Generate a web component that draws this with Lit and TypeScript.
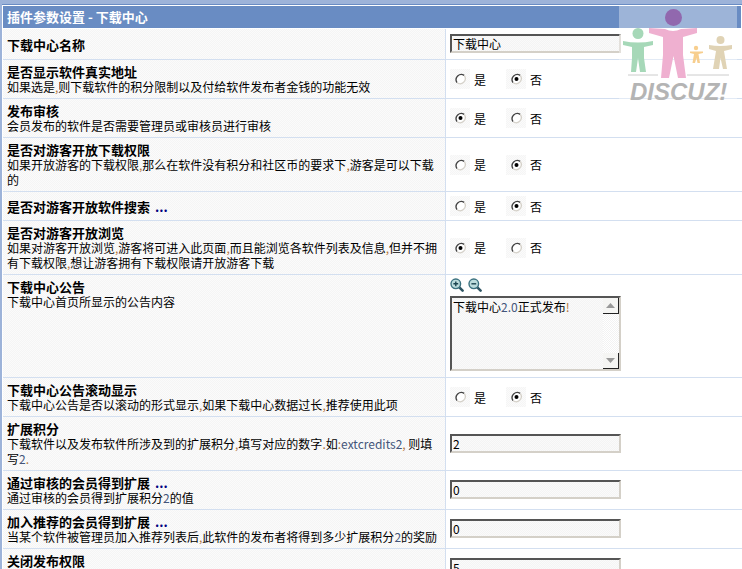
import { LitElement, html, css, svg } from "lit";
import { customElement } from "lit/decorators.js";

type Row = {
  title: string;
  more?: boolean;
  desc?: string;
  radio?: "yes" | "no";
  value?: string;
  notice?: boolean;
};

const ROWS: Row[] = [
  { title: "下载中心名称", value: "下载中心" },
  { title: "是否显示软件真实地址", desc: "如果选是,则下载软件的积分限制以及付给软件发布者金钱的功能无效", radio: "no" },
  { title: "发布审核", desc: "会员发布的软件是否需要管理员或审核员进行审核", radio: "yes" },
  { title: "是否对游客开放下载权限", desc: "如果开放游客的下载权限,那么在软件没有积分和社区币的要求下,游客是可以下载\n的", radio: "no" },
  { title: "是否对游客开放软件搜索", more: true, radio: "no" },
  { title: "是否对游客开放浏览", desc: "如果对游客开放浏览,游客将可进入此页面,而且能浏览各软件列表及信息,但并不拥\n有下载权限,想让游客拥有下载权限请开放游客下载", radio: "yes" },
  { title: "下载中心公告", desc: "下载中心首页所显示的公告内容", notice: true },
  { title: "下载中心公告滚动显示", desc: "下载中心公告是否以滚动的形式显示,如果下载中心数据过长,推荐使用此项", radio: "no" },
  { title: "扩展积分", desc: "下载软件以及发布软件所涉及到的扩展积分,填写对应的数字.如:extcredits2, 则填\n写2.", value: "2" },
  { title: "通过审核的会员得到扩展", more: true, desc: "通过审核的会员得到扩展积分2的值", value: "0" },
  { title: "加入推荐的会员得到扩展", more: true, desc: "当某个软件被管理员加入推荐列表后,此软件的发布者将得到多少扩展积分2的奖励", value: "0" },
  { title: "关闭发布权限", desc: "\u00a0", value: "5" },
];

const tint = (text: string) =>
  text.split(/([,.:]|[A-Za-z0-9]+)/).map((part, i) =>
    i % 2 === 0 ? part : html`<span class=${/[A-Za-z0-9]/.test(part) ? "latin" : "punct"}>${part}</span>`
  );

const radioIcon = (on: boolean) => html`<svg class="radio" width="20" height="20" viewBox="0 0 20 20">
  <circle cx="10.5" cy="10" r="5" fill="#fff"></circle>
  <path d="M7 13.600A5.200 5.200 0 0 1 14.200 6.400" fill="none" stroke="#444" stroke-width="1.4"></path>
  <path d="M14.400 6.600A5.200 5.200 0 0 1 7.200 13.800" fill="none" stroke="#d4d0c8" stroke-width="1.3"></path>
  ${on ? svg`<circle cx="10.5" cy="10" r="2" fill="#000"></circle>` : ""}
</svg>`;

const zoomIcon = (plus: boolean) => html`<svg width="14" height="14" viewBox="0 0 14 14">
  <path d="M8.600 8.600 12.600 12.600" stroke="#2f5563" stroke-width="2.600" stroke-linecap="round"></path>
  <circle cx="5.800" cy="5.800" r="4.800" fill="#bcdcdc" stroke="#3c7280" stroke-width="1.400"></circle>
  <path d="M3.400 5.800H8.200${plus ? "M5.800 3.400V8.200" : ""}" stroke="#1c4450" stroke-width="1.400"></path>
</svg>`;

@customElement("app-root")
export class AppRoot extends LitElement {
  static styles = css`
    :host {
      display: block;
      position: relative;
      width: 742px;
      height: 569px;
      overflow: hidden;
      background: #9db3d9;
      font-family: "Noto Sans CJK SC", "Liberation Sans", sans-serif;
      font-size: 12px;
      line-height: 15px;
      color: #000;
    }
    .outer {
      margin: 4px 0 0 2px;
      border-top: 1px solid #6a8cc3;
      background: #fff;
      padding: 1px 0 0 1px;
    }
    .head {
      background: #698cc3;
      color: #fff;
      font-weight: 700;
      font-size: 13px;
      height: 22px;
      line-height: 22px;
      padding-left: 4px;
      margin-right: 1px;
      border-bottom: 1px solid #fff;
    }
    .row {
      display: grid;
      grid-template-columns: 443px 1fr;
      border-bottom: 1px solid #d3dff0;
    }
    .label {
      display: flex;
      flex-direction: column;
      justify-content: center;
      padding: 4px;
      border-right: 1px solid #d3dff0;
      background: repeating-conic-gradient(#f5f5f5 0 25%, #fbfbfb 0 50%) 0 0 / 2px 2px;
    }
    .label.top {
      justify-content: flex-start;
    }
    .title {
      font-weight: 700;
      font-size: 13px;
    }
    .more {
      color: #000080;
      margin-left: 2px;
    }
    .desc {
      white-space: pre-line;
    }
    .latin {
      color: #44557a;
    }
    .punct {
      color: #b5763a;
    }
    .field {
      display: flex;
      flex-direction: column;
      justify-content: center;
      align-items: flex-start;
      padding: 5px 4px 6px;
    }
    .radios {
      display: flex;
      gap: 20px;
      padding: 4px 0;
      margin: -5px 0 -6px;
    }
    .opt {
      display: flex;
      align-items: center;
      gap: 4px;
    }
    .radio {
      display: block;
      background: repeating-conic-gradient(#f5f5f5 0 25%, #fbfbfb 0 50%) 0 0 / 2px 2px;
    }
    input {
      box-sizing: border-box;
      width: 171px;
      height: 19px;
      margin: 0;
      padding: 0 1px;
      border-width: 2px;
      border-style: solid;
      border-color: #555 #d4d0c8 #d4d0c8 #555;
      border-radius: 0;
      outline: none;
      background: repeating-conic-gradient(#f4f4f4 0 25%, #fafafa 0 50%) 0 0 / 2px 2px;
      font: 12px/15px "Noto Sans CJK SC", "Liberation Sans", sans-serif;
      color: #000;
    }
    .notice {
      justify-content: flex-start;
      padding-top: 3px;
      gap: 5px;
    }
    .zooms {
      display: flex;
      gap: 4px;
      height: 13px;
    }
    .zooms svg {
      display: block;
    }
    .area {
      box-sizing: border-box;
      display: flex;
      width: 171px;
      height: 75px;
      border-width: 2px;
      border-style: solid;
      border-color: #555 #d4d0c8 #d4d0c8 #555;
      background: repeating-conic-gradient(#f4f4f4 0 25%, #fafafa 0 50%) 0 0 / 2px 2px;
    }
    .area-text {
      flex: 1;
      padding: 1px;
    }
    .bar {
      width: 16px;
      display: flex;
      flex-direction: column;
      justify-content: space-between;
      background: repeating-conic-gradient(#f2f2f2 0 25%, #fff 0 50%) 0 0 / 2px 2px;
    }
    .btn {
      box-sizing: border-box;
      height: 16px;
      background: #f5f5f3;
      border-right: 1px solid #222;
      border-bottom: 1px solid #222;
      display: flex;
      align-items: center;
      justify-content: center;
    }
    .logo {
      position: absolute;
      left: 0;
      top: 0;
      pointer-events: none;
    }
    .logo-text {
      font: italic 700 24px "Liberation Sans", sans-serif;
      fill: #b4b4b4;
    }
  `;

  private field(r: Row) {
    if (r.notice) {
      return html`<div class="field notice">
        <div class="zooms">${zoomIcon(true)}${zoomIcon(false)}</div>
        <div class="area">
          <div class="area-text">下载中心<span class="latin">2.0</span>正式发布<span class="punct">!</span></div>
          <div class="bar">
            <div class="btn"><svg width="9" height="5"><path d="M4.500 0 9 5H0Z" fill="#999"></path></svg></div>
            <div class="btn"><svg width="9" height="5"><path d="M0 0H9L4.500 5Z" fill="#999"></path></svg></div>
          </div>
        </div>
      </div>`;
    }
    if (r.radio) {
      return html`<div class="field"><div class="radios">
        <label class="opt">${radioIcon(r.radio === "yes")}是</label>
        <label class="opt">${radioIcon(r.radio === "no")}否</label>
      </div></div>`;
    }
    return html`<div class="field"><input .value=${r.value ?? ""} /></div>`;
  }

  render() {
    return html`
      <div class="outer">
        <div class="head">插件参数设置 - 下载中心</div>
        ${ROWS.map(
          (r) => html`<div class="row">
            <div class="label ${r.notice ? "top" : ""}">
              <div class="title">${r.title}${r.more ? html`<span class="more"> ...</span>` : ""}</div>
              ${r.desc ? html`<div class="desc">${tint(r.desc)}</div>` : ""}
            </div>
            ${this.field(r)}
          </div>`
        )}
      </div>
      <svg class="logo" width="742" height="110" viewBox="0 0 742 110">
        <rect x="619" y="6" width="118" height="98" fill="#fff" opacity="0.35"></rect>
        <circle cx="673.500" cy="17.500" r="8.500" fill="#9168ae"></circle>
        <path d="M649 28 665 29Q673 33 681 29L697 28V33L683 37V55L686 78H678L673.500 56 669 78H661L663 55V37L649 33Z" fill="#efb0d0"></path>
        <circle cx="638" cy="33.500" r="5.500" fill="#a6d8b8"></circle>
        <path d="M623 41Q638 44 653 41V45L644 47V58L646 72H640L638 58 636 72H631L632 58V47L623 45Z" fill="#a6d8b8"></path>
        <circle cx="720.500" cy="40" r="4" fill="#e0d3b5"></circle>
        <path d="M709 45Q720 47 732 45V49L724 51 727 69H723L720.500 58 719 69H713L716 51 709 49Z" fill="#e0d3b5"></path>
        <circle cx="696" cy="48" r="2.200" fill="#f7ce8e"></circle>
        <path d="M690 51.500H703V53L698.500 54 700 63H697.500L696.500 58 695 63H692.500L694 54 690 53Z" fill="#f7ce8e"></path>
        <path d="M628 75H658M687 75H729" stroke="#ccc" stroke-width="1"></path>
        <text class="logo-text" x="630" y="100">DISCUZ!</text>
      </svg>
    `;
  }
}
